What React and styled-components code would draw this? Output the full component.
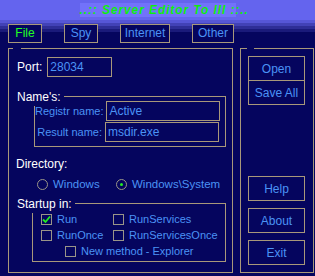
import React from 'react';
import styled, { createGlobalStyle } from 'styled-components';

const Global = createGlobalStyle`
  html, body { margin: 0; padding: 0; background: #05055e; }
  body { font-family: "Liberation Sans", Arial, sans-serif; font-size: 11px; }
  * { box-sizing: border-box; }
`;

const navy = '#05055e';
const tan = '#a8987a';
const blue = '#4b93f5';

const Window = styled.div`
  width: 315px;
  height: 276px;
  background: linear-gradient(
    to bottom,
    #6464ee 0px, #6464ee 20px,
    #5656d6 20px, #5656d6 23px,
    #4242b6 23px, #4242b6 26px,
    #2e2e96 26px, #2e2e96 29px,
    #1a1a7a 29px, #1a1a7a 32px,
    ${navy} 32px
  );
  overflow: hidden;
`;

const TitleBar = styled.div`
  height: 24px;
  padding-top: 3px;
  display: flex;
  justify-content: center;
`;

const TitleBand = styled.div`
  width: 156px;
  height: 14px;
  background: #7272fa;
  color: #10ee10;
  font-weight: bold;
  font-style: italic;
  font-size: 12px;
  line-height: 14px;
  text-align: center;
  letter-spacing: 0.9px;
  white-space: nowrap;
`;

const Tabs = styled.div`
  display: flex;
  gap: 22px;
  padding-left: 8px;
  height: 19px;
`;

const Tab = styled.div`
  flex: 0 0 ${p => p.$w}px;
  height: 19px;
  border: 1px solid ${tan};
  background: ${navy};
  color: ${p => (p.$active ? '#22ff22' : blue)};
  font-size: 12px;
  line-height: 17px;
  text-align: center;
`;

const Body = styled.div`
  display: flex;
  gap: 7px;
  padding: 5px 0 0 8px;
`;

const Frame = styled.div`
  position: relative;
  border: 1px solid ${tan};
  height: 225px;
  flex: 0 0 ${p => p.$w}px;
  display: flex;
  flex-direction: column;
`;

const FrameNotch = styled.span`
  position: absolute;
  top: -1px;
  left: ${p => p.$l}px;
  width: ${p => p.$w}px;
  height: 1px;
  background: ${navy};
`;

const LeftContent = styled.div`
  padding: 8px 0 0 8px;
  display: flex;
  flex-direction: column;
`;

const Row = styled.div`
  display: flex;
  align-items: center;
  gap: ${p => p.$gap || 0}px;
`;

const Label = styled.span`
  color: #ffffff;
  font-size: 12px;
  white-space: nowrap;
`;

const Input = styled.div`
  flex: 0 0 ${p => p.$w}px;
  height: 20px;
  border: 1px solid ${tan};
  color: ${blue};
  font-size: 12px;
  line-height: 18px;
  padding-left: 2px;
`;

const Group = styled.div`
  position: relative;
  border: 1px solid ${tan};
  margin-left: ${p => p.$ml}px;
  margin-top: ${p => p.$mt}px;
  width: ${p => p.$w}px;
  height: ${p => p.$h}px;
`;

const Caption = styled.span`
  position: absolute;
  top: -9px;
  left: ${p => p.$l}px;
  height: 18px;
  line-height: 18px;
  padding-right: 3px;
  background: ${navy};
  color: #ffffff;
  font-size: 12px;
  white-space: nowrap;
`;

const NameRows = styled.div`
  padding: 4px 6px 0 0;
  display: flex;
  flex-direction: column;
  gap: 1px;
`;

const FieldLabel = styled.span`
  flex: 0 0 70px;
  padding-right: 3px;
  text-align: right;
  color: ${blue};
  font-size: 11px;
  white-space: nowrap;
`;

const DirLabel = styled(Label)`
  margin-top: 10px;
  line-height: 14px;
  margin-left: -1px;
`;

const Radios = styled.div`
  display: grid;
  grid-template-columns: 79px auto;
  align-items: center;
  margin: 5px 0 0 20px;
  height: 16px;
`;

const RadioItem = styled.div`
  display: flex;
  align-items: center;
  gap: 5px;
  color: ${blue};
  font-size: 11.5px;
  white-space: nowrap;
`;

const RadioCircle = styled.span`
  flex: 0 0 11px;
  height: 11px;
  border-radius: 50%;
  border: 1px solid #9a9588;
  display: flex;
  align-items: center;
  justify-content: center;
  &::after {
    content: '';
    width: 3px;
    height: 3px;
    border-radius: 50%;
    background: ${p => (p.$on ? '#22ee22' : 'transparent')};
  }
`;

const Checks = styled.div`
  display: grid;
  grid-template-columns: 72px auto;
  grid-auto-rows: 16px;
  padding: 7px 0 0 8px;
`;

const CheckItem = styled.div`
  display: flex;
  align-items: center;
  gap: 5px;
  color: ${blue};
  font-size: 11px;
  white-space: nowrap;
  ${p => p.$span && `grid-column: 1 / span 2; padding-left: 24px;`}
`;

const Box = styled.span`
  flex: 0 0 11px;
  height: 11px;
  border: 1px solid #9a9588;
  display: flex;
  align-items: center;
  justify-content: center;
`;

const RightContent = styled.div`
  flex: 1;
  padding: 7px 0 7px 7px;
  display: flex;
  flex-direction: column;
  justify-content: space-between;
`;

const BtnStack = styled.div`
  display: flex;
  flex-direction: column;
  gap: ${p => p.$gap}px;
`;

const Button = styled.div`
  width: 57px;
  height: ${p => p.$h || 25}px;
  border: 1px solid ${tan};
  ${p => p.$joined && 'border-top: none;'}
  color: ${blue};
  font-size: 12px;
  display: flex;
  align-items: center;
  justify-content: center;
`;

function Check({ label, on, span }) {
  return (
    <CheckItem $span={span}>
      <Box>
        {on && (
          <svg width="9" height="9" viewBox="0 0 9 9">
            <path d="M1 4.5 L3.5 7 L8 1.5" fill="none" stroke="#22ee22" strokeWidth="1.8" />
          </svg>
        )}
      </Box>
      {label}
    </CheckItem>
  );
}

export default function App() {
  return (
    <Window>
      <Global />
      <TitleBar>
        <TitleBand>..:: Server Editor To III ::..</TitleBand>
      </TitleBar>
      <Tabs>
        <Tab $w={34} $active>File</Tab>
        <Tab $w={34}>Spy</Tab>
        <Tab $w={50}>Internet</Tab>
        <Tab $w={42}>Other</Tab>
      </Tabs>
      <Body>
        <Frame $w={225}>
          <FrameNotch $l={4} $w={8} />
          <LeftContent>
            <Row $gap={5}>
              <Label>Port:</Label>
              <Input $w={65}>28034</Input>
            </Row>
            <Group $ml={17} $mt={19} $w={192} $h={51}>
              <Caption $l={-18}>Name's:</Caption>
              <NameRows>
                <Row>
                  <FieldLabel>Registr name:</FieldLabel>
                  <Input $w={114}>Active</Input>
                </Row>
                <Row>
                  <FieldLabel>Result name:</FieldLabel>
                  <Input $w={114}>msdir.exe</Input>
                </Row>
              </NameRows>
            </Group>
            <DirLabel>Directory:</DirLabel>
            <Radios>
              <RadioItem>
                <RadioCircle />
                Windows
              </RadioItem>
              <RadioItem>
                <RadioCircle $on />
                Windows\System
              </RadioItem>
            </Radios>
            <Group $ml={15} $mt={11} $w={194} $h={59}>
              <Caption $l={-16}>Startup in:</Caption>
              <Checks>
                <Check label="Run" on />
                <Check label="RunServices" />
                <Check label="RunOnce" />
                <Check label="RunServicesOnce" />
                <Check label="New method - Explorer" span />
              </Checks>
            </Group>
          </LeftContent>
        </Frame>
        <Frame $w={74}>
          <FrameNotch $l={6} $w={7} />
          <RightContent>
            <BtnStack $gap={0}>
              <Button>Open</Button>
              <Button $joined $h={24}>Save All</Button>
            </BtnStack>
            <BtnStack $gap={7}>
              <Button>Help</Button>
              <Button>About</Button>
              <Button>Exit</Button>
            </BtnStack>
          </RightContent>
        </Frame>
      </Body>
    </Window>
  );
}
